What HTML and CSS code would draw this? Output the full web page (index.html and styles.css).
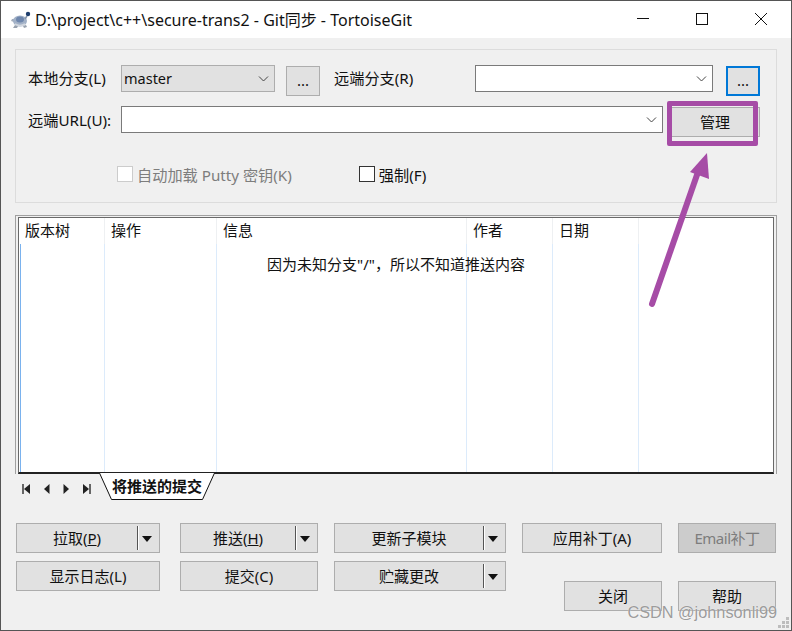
FILE: index.html
```html
<!DOCTYPE html>
<html lang="en">
<head>
  <meta charset="UTF-8">
  <title>Git同步 - TortoiseGit</title>
  <link rel="stylesheet" href="styles.css">
</head>
<body>
  <div class="window">
    <!-- Title Bar -->
    <div class="titlebar">
      <svg class="app-icon" width="22" height="20" viewBox="0 0 22 20">
        <path d="M4 12 L1 11 L2 9 L5 9 Z" fill="#a3adbb"/>
        <path d="M5 15 L3 18 L7 18 L8 16 Z M13 16 L14 18 L17 17 L16 15 Z" fill="#99a2af"/>
        <ellipse cx="10" cy="11" rx="7" ry="5.5" fill="#a2b1c7"/>
        <ellipse cx="10" cy="9.5" rx="4" ry="3" fill="#6f87ad"/>
        <path d="M5 14 Q10 17 15 14" stroke="#d3d8df" stroke-width="1.5" fill="none"/>
        <circle cx="18" cy="4" r="2.2" fill="#1f3f6e"/>
        <path d="M17 6 L15 9" stroke="#8494aa" stroke-width="1.5"/>
      </svg>
      <span class="title-text">D:\project\c++\secure-trans2 - Git同步 - TortoiseGit</span>
      <div class="caption-btns">
        <svg class="caption-icon" width="14" height="14" viewBox="0 0 14 14"><path d="M1 6.5 H13" stroke="#111" fill="none"/></svg>
        <svg class="caption-icon" width="14" height="14" viewBox="0 0 14 14"><rect x="1.5" y="1.5" width="11" height="11" stroke="#111" fill="none"/></svg>
        <svg class="caption-icon" width="14" height="14" viewBox="0 0 14 14"><path d="M1 1 L13 13 M13 1 L1 13" stroke="#111" fill="none"/></svg>
      </div>
    </div>

    <div class="content">
      <!-- Remote Settings -->
      <div class="group">
        <div class="form-row">
          <label class="label label-first">本地分支(L)</label>
          <div class="combo combo-gray combo-local">
            <span>master</span>
            <svg class="chevron" width="11" height="6" viewBox="0 0 11 6"><path d="M1 0.5 L5.5 5 L10 0.5" stroke="#444" fill="none"/></svg>
          </div>
          <button class="btn btn-dots">...</button>
          <label class="label label-remote">远端分支(R)</label>
          <div class="combo combo-remote">
            <svg class="chevron" width="11" height="6" viewBox="0 0 11 6"><path d="M1 0.5 L5.5 5 L10 0.5" stroke="#444" fill="none"/></svg>
          </div>
          <button class="btn btn-dots btn-focus">...</button>
        </div>
        <div class="form-row form-row-url">
          <label class="label label-first">远端URL(U):</label>
          <div class="combo combo-url">
            <svg class="chevron" width="11" height="6" viewBox="0 0 11 6"><path d="M1 0.5 L5.5 5 L10 0.5" stroke="#444" fill="none"/></svg>
          </div>
          <button class="btn btn-manage">管理</button>
        </div>
        <div class="check-row">
          <span class="check check-disabled"></span>
          <span class="check-label muted">自动加载 Putty 密钥(K)</span>
          <span class="check check-force"></span>
          <span class="check-label">强制(F)</span>
        </div>
      </div>

      <!-- Commit List -->
      <div class="list">
        <div class="list-inner">
          <div class="list-col col-tree"><span class="list-head">版本树</span></div>
          <div class="list-col col-action"><span class="list-head">操作</span></div>
          <div class="list-col col-msg"><span class="list-head">信息</span></div>
          <div class="list-col col-author"><span class="list-head">作者</span></div>
          <div class="list-col col-date"><span class="list-head">日期</span></div>
          <div class="list-col col-rest"></div>
          <div class="list-note">因为未知分支"/"，所以不知道推送内容</div>
        </div>
      </div>

      <!-- Tabs -->
      <div class="tabs">
        <div class="tab-nav">
          <svg width="10" height="10" viewBox="0 0 10 10"><path d="M1 0 H3 V10 H1 Z" fill="#666"/><path d="M9 0 V10 L3 5 Z" fill="#222"/></svg>
          <svg width="8" height="10" viewBox="0 0 8 10"><path d="M6.5 0 V10 L1 5 Z" fill="#222"/></svg>
          <svg width="8" height="10" viewBox="0 0 8 10"><path d="M1.5 0 V10 L7 5 Z" fill="#222"/></svg>
          <svg width="10" height="10" viewBox="0 0 10 10"><path d="M1 0 V10 L7 5 Z" fill="#222"/><path d="M7 0 H9 V10 H7 Z" fill="#666"/></svg>
        </div>
        <div class="tab">
          <svg class="tab-shape" width="118" height="27" viewBox="0 0 118 27"><path d="M0.5 0 L12.5 26.5 H103.5 L115.5 0" fill="#fff" stroke="#111"/></svg>
          <span class="tab-text">将推送的提交</span>
        </div>
      </div>

      <!-- Action Buttons -->
      <div class="actions">
        <button class="btn btn-split btn-first"><span class="split-text">拉取(<u>P</u>)</span><span class="split-arrow"></span></button>
        <button class="btn btn-split"><span class="split-text">推送(<u>H</u>)</span><span class="split-arrow"></span></button>
        <button class="btn btn-split"><span class="split-text">更新子模块</span><span class="split-arrow"></span></button>
        <button class="btn">应用补丁(A)</button>
        <button class="btn btn-disabled">Email补丁</button>
        <button class="btn btn-first">显示日志(L)</button>
        <button class="btn">提交(C)</button>
        <button class="btn btn-split"><span class="split-text">贮藏更改</span><span class="split-arrow"></span></button>
        <button class="btn btn-low btn-close">关闭</button>
        <button class="btn btn-low">帮助</button>
      </div>
    </div>

    <!-- Annotation drawn on top of the screenshot -->
    <div class="mark-box"></div>
    <svg class="mark-arrow" width="80" height="170" viewBox="0 0 80 170">
      <path d="M22 164 L68 32" stroke="#a64ca6" stroke-width="6" stroke-linecap="round" fill="none"/>
      <path d="M77 13 L79 39 L60 32 Z" fill="#a64ca6"/>
    </svg>
    <div class="watermark">CSDN @johnsonli99</div>
    <svg class="grip" width="12" height="12" viewBox="0 0 12 12">
      <path d="M8 0 h3 v3 h-3 Z M4 4 h3 v3 h-3 Z M8 4 h3 v3 h-3 Z M0 8 h3 v3 h-3 Z M4 8 h3 v3 h-3 Z M8 8 h3 v3 h-3 Z" fill="#bdbdbd"/>
    </svg>
  </div>
</body>
</html>
```

FILE: styles.css
```css
/* General Styles */
html, body {
  margin: 0;
  padding: 0;
}

body {
  font-family: "Noto Sans", "Noto Sans CJK SC", sans-serif;
  font-size: 15px;
  color: #111;
  background: #333;
}

.window {
  position: relative;
  box-sizing: border-box;
  width: 792px;
  height: 631px;
  overflow: hidden;
  background: #f0f0f0;
  border: 1px solid #555;
}

/* Title Bar */
.titlebar {
  display: flex;
  align-items: center;
  box-sizing: border-box;
  height: 37px;
  background: #fff;
  padding: 0 0 2px 9px;
}

.app-icon {
  margin: 3px 3px 0 0;
}

.title-text {
  flex: 1;
  font-size: 16px;
  white-space: nowrap;
}

.caption-btns {
  display: flex;
  gap: 45px;
  margin-right: 23px;
}

/* Group Box */
.content {
  padding: 11px 14px 0;
}

.group {
  box-sizing: border-box;
  width: 762px;
  height: 154px;
  border: 1px solid #dcdcdc;
  padding: 15px 16px 0 12px;
}

.form-row {
  display: flex;
  align-items: flex-start;
  height: 41px;
}

.form-row-url .label {
  line-height: 29px;
}

.label {
  font-size: 15.2px;
  line-height: 27px;
  white-space: nowrap;
}

.label-first {
  width: 93px;
}

.label-remote {
  width: 141px;
  margin-left: 14px;
}

.combo {
  position: relative;
  box-sizing: border-box;
  height: 27px;
  font-size: 14.5px;
  line-height: 25px;
  padding-left: 2px;
  background: #fff;
  border: 1px solid #7a7a7a;
}

.combo-gray {
  background: #e1e1e1;
  border-color: #adadad;
}

.combo-local {
  width: 154px;
}

.combo-remote {
  width: 238px;
}

.combo-url {
  width: 542px;
}

.chevron {
  position: absolute;
  right: 5px;
  top: 10px;
}

/* Buttons */
.btn {
  box-sizing: border-box;
  height: 30px;
  padding: 0 0 2px;
  font: inherit;
  font-size: 15px;
  color: #111;
  background: #e1e1e1;
  border: 1px solid #adadad;
}

.btn-dots {
  width: 34px;
  margin: 1px 0 0 11px;
}

.btn-focus {
  margin-left: 13px;
  border: 2px solid #0078d7;
}

.btn-manage {
  width: 90px;
  margin: 1px 0 0 7px;
}

/* Checkboxes */
.check-row {
  display: flex;
  align-items: center;
  height: 18px;
  margin: 18px 0 0 89px;
}

.check {
  box-sizing: border-box;
  width: 16px;
  height: 16px;
  margin-right: 4px;
  background: #fff;
  border: 1px solid #333;
}

.check-disabled {
  border-color: #ccc;
}

.check-force {
  margin-left: 67px;
}

.check-label {
  font-size: 15.2px;
  white-space: nowrap;
}

.muted {
  color: #7d7d7d;
}

/* Commit List */
.list {
  box-sizing: border-box;
  width: 762px;
  height: 259px;
  margin-top: 12px;
  padding: 1px 2px 0 2px;
  border: 1px solid #a0a0a0;
  border-bottom: 0;
}

.list-inner {
  position: relative;
  display: flex;
  box-sizing: border-box;
  height: 257px;
  background: #fff;
  border: 1px solid #696969;
  border-bottom: 2px solid #222;
}

.list-col {
  box-sizing: border-box;
  height: 100%;
  padding-left: 6px;
  background: linear-gradient(#eef0f2, #eef0f2) right top / 1px 26px no-repeat,
    linear-gradient(#dcebfb, #dcebfb) right 26px / 1px 100% no-repeat;
}

.list-head {
  display: block;
  line-height: 24px;
}

.col-tree {
  width: 86px;
}

.col-tree::before {
  content: "";
  position: absolute;
  left: 1px;
  top: 26px;
  bottom: 0;
  width: 1px;
  background: #7ab2ee;
}

.col-action {
  width: 112px;
}

.col-msg {
  width: 250px;
}

.col-author {
  width: 86px;
}

.col-date {
  width: 86px;
}

.col-rest {
  flex: 1;
  background: none;
}

.list-note {
  position: absolute;
  left: 0;
  right: 0;
  top: 35px;
  text-align: center;
  white-space: nowrap;
}

/* Tabs */
.tabs {
  display: flex;
  align-items: flex-start;
  height: 27px;
}

.tab-nav {
  display: flex;
  align-items: center;
  justify-content: space-between;
  box-sizing: border-box;
  width: 84px;
  height: 28px;
  padding: 1px 7px 0 6px;
}

.tab {
  position: relative;
  width: 118px;
  height: 27px;
  margin-top: -1px;
}

.tab-shape {
  display: block;
}

.tab-text {
  position: absolute;
  left: 13px;
  top: 2px;
  font-size: 15px;
  font-weight: 700;
  white-space: nowrap;
}

/* Action Buttons */
.actions {
  display: grid;
  grid-template-columns: 148px 138px 172px 140px 98px;
  grid-template-rows: 30px 30px;
  column-gap: 16px;
  row-gap: 8px;
  margin: 22px 0 0 1px;
}

.actions .btn {
  width: 100%;
  height: 30px;
}

.actions .btn-first {
  width: 144px;
}

.btn-split {
  display: flex;
  align-items: center;
}

.split-text {
  flex: 1;
  text-align: center;
}

.split-arrow {
  position: relative;
  box-sizing: border-box;
  width: 22px;
  height: 24px;
  margin-top: 2px;
  border-left: 1px solid #555;
  box-shadow: inset 1px 0 0 #fff;
}

.split-arrow::after {
  content: "";
  position: absolute;
  left: 4px;
  top: 10px;
  border: 5.5px solid transparent;
  border-top: 6px solid #111;
  border-bottom: 0;
}

.btn-disabled {
  color: #7d7d7d;
  background: #ccc;
  letter-spacing: -0.5px;
}

.btn-low {
  margin-top: 20px;
}

.actions .btn-close {
  width: 98px;
  justify-self: end;
}

/* Annotations */
.mark-box {
  position: absolute;
  left: 666px;
  top: 100px;
  box-sizing: border-box;
  width: 91px;
  height: 45px;
  border: 5px solid #a64ca6;
  border-radius: 2px;
}

.mark-arrow {
  position: absolute;
  left: 629px;
  top: 139px;
}

.watermark {
  position: absolute;
  right: 14px;
  top: 602px;
  font-family: "Liberation Sans", sans-serif;
  font-size: 16.3px;
  color: rgba(130, 130, 130, 0.8);
  text-shadow: 0 0 1px #fff;
  white-space: nowrap;
}

.grip {
  position: absolute;
  right: 1px;
  bottom: 1px;
}
```
